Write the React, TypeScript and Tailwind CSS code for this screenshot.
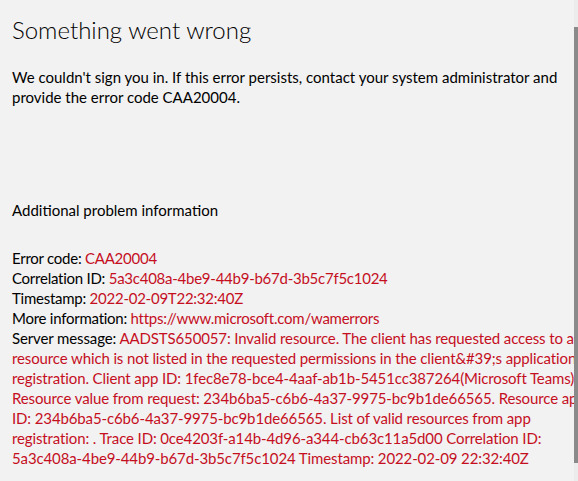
import React from 'react'

const details: { label: string; value: string }[] = [
  { label: 'Error code: ', value: 'CAA20004' },
  { label: 'Correlation ID: ', value: '5a3c408a-4be9-44b9-b67d-3b5c7f5c1024' },
  { label: 'Timestamp: ', value: '2022-02-09T22:32:40Z' },
  { label: 'More information: ', value: 'https://www.microsoft.com/wamerrors' },
]

const serverLines = [
  'resource which is not listed in the requested permissions in the client&#39;s application',
  'registration. Client app ID: 1fec8e78-bce4-4aaf-ab1b-5451cc387264(Microsoft Teams).',
  'Resource value from request: 234b6ba5-c6b6-4a37-9975-bc9b1de66565. Resource app',
  'ID: 234b6ba5-c6b6-4a37-9975-bc9b1de66565. List of valid resources from app',
  'registration: . Trace ID: 0ce4203f-a14b-4d96-a344-cb63c11a5d00 Correlation ID:',
  '5a3c408a-4be9-44b9-b67d-3b5c7f5c1024 Timestamp: 2022-02-09 22:32:40Z',
]

export default function App() {
  return (
    <div className="relative bg-[#f2f2f2] w-[578px] h-[481px] overflow-hidden text-black font-['Lato',sans-serif]">
      <div className="px-3 pt-[14px]">
        <h1 className="text-[24px] font-light leading-[32px] text-black">Something went wrong</h1>

        <p className="mt-[21px] text-[15px] leading-[20px]">
          We couldn't sign you in. If this error persists, contact your system administrator and
          <br />
          provide the error code CAA20004.
        </p>

        <p className="mt-[93px] text-[15px] leading-[20px]">Additional problem information</p>

        <div className="mt-[28px] text-[15px] leading-[20px] whitespace-nowrap">
          <div className="tracking-[-0.25px]">
            {details.map((d) => (
              <div key={d.label}>
                {d.label}
                <span className="text-[#c50f1f]">{d.value}</span>
              </div>
            ))}
          </div>
          <div className="tracking-[-0.12px]">
            <div>
              Server message:{' '}
              <span className="text-[#c50f1f]">
                AADSTS650057: Invalid resource. The client has requested access to a
              </span>
            </div>
            {serverLines.map((l) => (
              <div key={l} className="text-[#c50f1f]">
                {l}
              </div>
            ))}
          </div>
        </div>
      </div>

      {/* scrollbar */}
      <div className="absolute top-0 right-0 w-[4px] h-full bg-[#ececec]">
        <div className="mt-[27px] h-[436px] bg-[#8a8a8a]" />
      </div>
    </div>
  )
}
